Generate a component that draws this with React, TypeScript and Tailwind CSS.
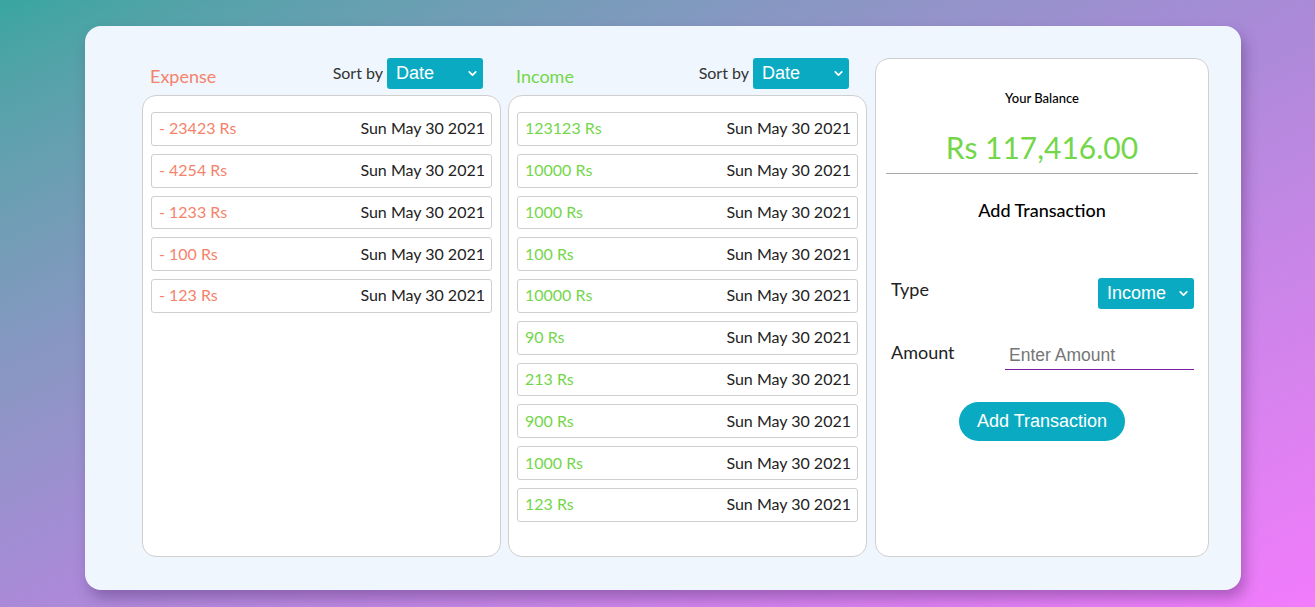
import { ChevronDown } from "lucide-react";

const EXPENSES = ["- 23423 Rs", "- 4254 Rs", "- 1233 Rs", "- 100 Rs", "- 123 Rs"];
const INCOMES = [
  "123123 Rs",
  "10000 Rs",
  "1000 Rs",
  "100 Rs",
  "10000 Rs",
  "90 Rs",
  "213 Rs",
  "900 Rs",
  "1000 Rs",
  "123 Rs",
];

const DATE = "Sun May 30 2021";

function TealSelect({ value, options }: { value: string; options: string[] }) {
  return (
    <div className="relative w-[96px] h-[31px]">
      <select
        defaultValue={value}
        className="appearance-none w-full h-full rounded-[3px] bg-[#0aabc2] text-white text-[18px] pl-[9px] outline-none font-['Liberation_Sans',Arial,sans-serif]"
      >
        {options.map((o) => (
          <option key={o} value={o} className="bg-white text-black">
            {o}
          </option>
        ))}
      </select>
      <ChevronDown
        size={13}
        strokeWidth={3.2}
        className="absolute right-[4px] top-[9px] text-white pointer-events-none"
      />
    </div>
  );
}

function Column({
  title,
  color,
  items,
}: {
  title: string;
  color: string;
  items: string[];
}) {
  return (
    <div className="w-[359px] flex flex-col">
      <div className="h-[31px] flex items-center justify-between mb-[6px]">
        <span className={`pl-[8px] pt-[6px] text-[18px] ${color}`}>{title}</span>
        <div className="flex items-center gap-[4px] pr-[18px]">
          <span className="text-[16px] text-[#333] pb-[1px]">Sort by</span>
          <TealSelect value="Date" options={["Date", "Amount"]} />
        </div>
      </div>
      <div className="flex-1 bg-white border border-[#cfcfcf] rounded-[14px] px-[8px] pt-[16px] flex flex-col gap-2">
        {items.map((a, i) => (
          <div
            key={i}
            className="h-[33.78px] shrink-0 border border-[#cfcfcf] rounded-[3px] flex items-center justify-between pl-[7px] pr-[6px] pb-[1px] text-[16px]"
          >
            <span className={color}>{a}</span>
            <span className="text-[#222]">{DATE}</span>
          </div>
        ))}
      </div>
    </div>
  );
}

export default function App() {
  return (
    <div className="w-[1315px] h-[607px] overflow-hidden bg-linear-to-br from-[#38a6a0] via-[#a98ad8] to-[#f27bfc] pt-[26px] font-['Lato',sans-serif]">
      <div className="ml-[85px] w-[1156px] h-[564px] bg-[#eff6fe] rounded-[16px] shadow-[4px_8px_14px_rgba(60,30,90,0.35)] pl-[57px] pr-[32px] pt-[32px] pb-[33px] flex">
        <Column title="Expense" color="text-[#f5836c]" items={EXPENSES} />
        <div className="w-[7px]" />
        <Column title="Income" color="text-[#74d64a]" items={INCOMES} />
        <div className="w-[8px]" />
        <div className="w-[334px] bg-white border border-[#cfcfcf] rounded-[14px] px-[10px] flex flex-col">
          <div className="text-center text-[13px] font-medium text-black mt-[30px]">
            Your Balance
          </div>
          <div className="text-center text-[30px] text-[#74d64a] mt-[18px] leading-[40px]">
            Rs 117,416.00
          </div>
          <div className="h-px bg-[#a8a8a8] mt-[6px]" />
          <div className="text-center text-[18px] font-medium text-black mt-[23px]">
            Add Transaction
          </div>
          <div className="flex items-center justify-between mt-[54px] pl-[5px] pr-[4px]">
            <span className="text-[18px] text-[#222] -mt-[8px]">Type</span>
            <TealSelect value="Income" options={["Income", "Expense"]} />
          </div>
          <div className="flex items-center justify-between mt-[31px] pl-[5px] pr-[4px]">
            <span className="text-[18px] text-[#222] -mt-[4px]">Amount</span>
            <input
              placeholder="Enter Amount"
              className="w-[189px] h-[30px] border-b border-[#7a1fa2] px-[4px] pt-[3px] text-[17.5px] outline-none bg-transparent font-['Liberation_Sans',Arial,sans-serif] placeholder:text-[#757575]"
            />
          </div>
          <div className="flex justify-center mt-[32px]">
            <button className="w-[166px] h-[39px] rounded-[20px] bg-[#0aabc2] text-white text-[18px] font-['Liberation_Sans',Arial,sans-serif]">
              Add Transaction
            </button>
          </div>
        </div>
      </div>
    </div>
  );
}
